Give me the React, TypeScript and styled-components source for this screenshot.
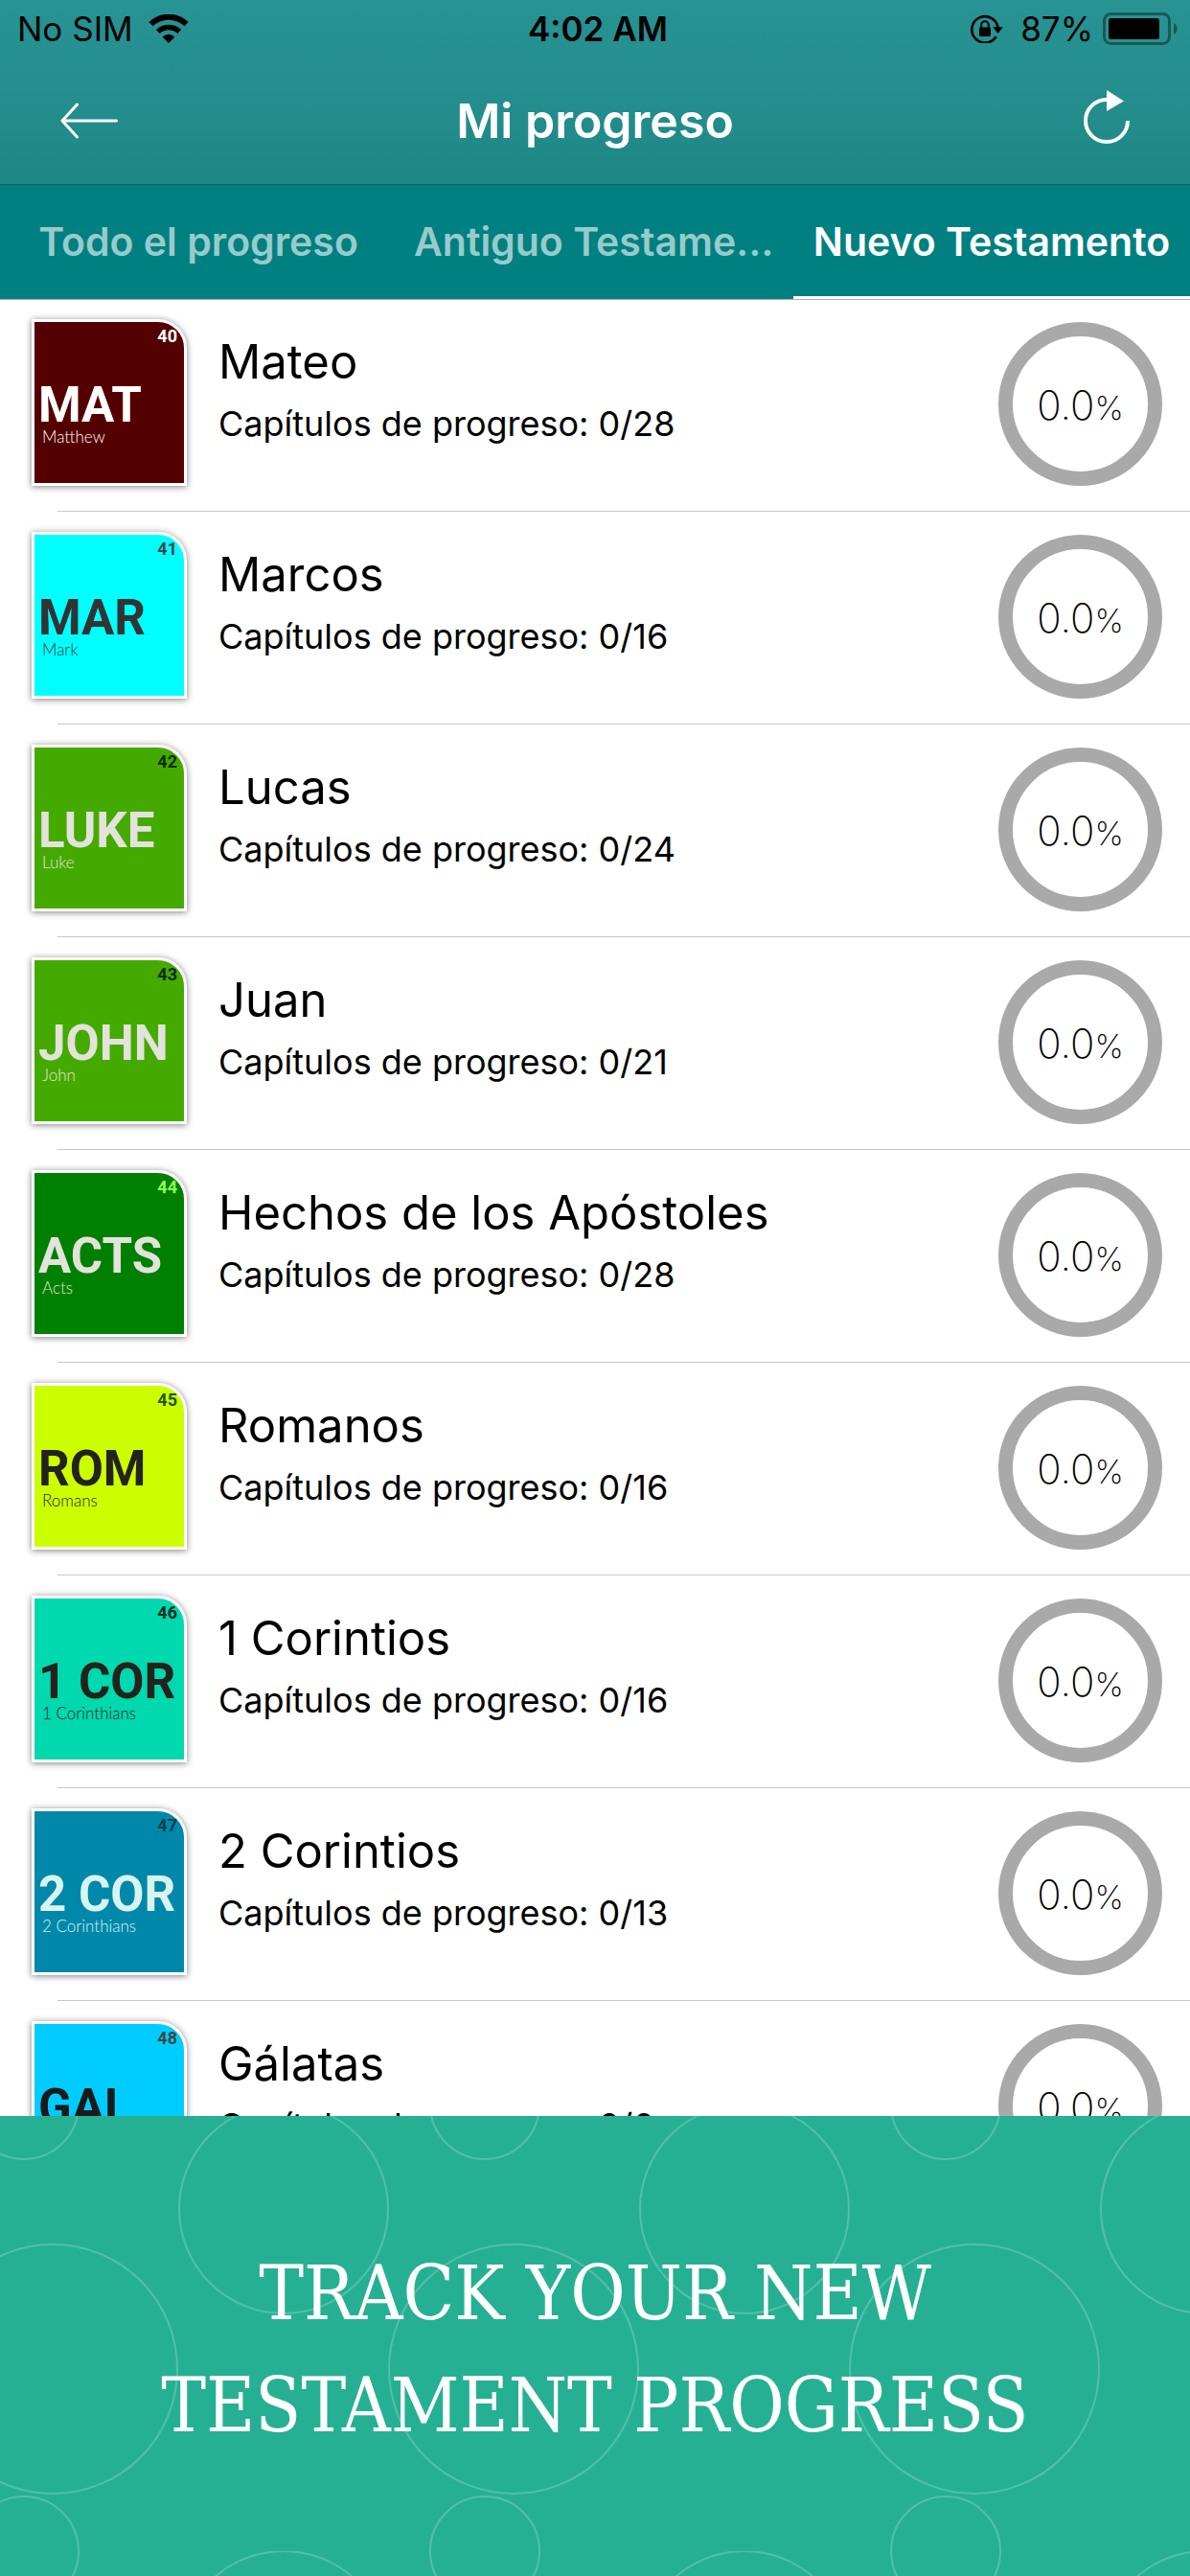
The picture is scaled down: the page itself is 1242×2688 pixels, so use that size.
import React, { useState } from 'react'
import styled, { createGlobalStyle } from 'styled-components'

const GlobalStyle = createGlobalStyle`
  * {
    box-sizing: border-box;
  }
  body {
    margin: 0;
    background: #fff;
    color: #000;
    font-family: Inter, 'Liberation Sans', sans-serif;
  }
  button {
    border: 0;
    padding: 0;
    background: none;
    color: inherit;
    font: inherit;
    cursor: pointer;
  }
`

const Screen = styled.div`
  display: flex;
  flex-direction: column;
  height: 100vh;
  overflow: hidden;
`

const Header = styled.header`
  flex: none;
  background: linear-gradient(#279392, #238e8d 55%, #1e8785);
  border-bottom: 1px solid #0c6261;
`

const StatusBar = styled.div`
  display: grid;
  grid-template-columns: 1fr auto 1fr;
  align-items: center;
  height: 60px;
  padding: 0 12px 0 18px;
  font-size: 35px;
`

const StatusGroup = styled.div<{ $end?: boolean }>`
  display: flex;
  align-items: center;
  justify-content: ${(p) => (p.$end ? 'flex-end' : 'flex-start')};
  gap: ${(p) => (p.$end ? 10 : 16)}px;

  svg {
    flex: none;
  }
`

const Clock = styled.span`
  font-weight: 600;
`

const Charge = styled.span`
  margin-left: 8px;
`

const NavBar = styled.div`
  display: grid;
  grid-template-columns: 90px 1fr 90px;
  align-items: center;
  height: 132px;
  padding: 0 48px;
  color: #fff;
`

const NavButton = styled.button<{ $end?: boolean }>`
  display: flex;
  justify-content: ${(p) => (p.$end ? 'flex-end' : 'flex-start')};
  padding: 0 15px;

  svg {
    flex: none;
  }
`

const Title = styled.h1`
  margin: 0;
  font-size: 50px;
  font-weight: 600;
  line-height: 60px;
  text-align: center;
`

const Tabs = styled.div`
  position: relative;
  flex: none;
  display: grid;
  grid-template-columns: repeat(3, 1fr);
  height: 119px;
  background: #008080;
  box-shadow: 0 1px #b2b2b2;
  z-index: 1;
`

const Tab = styled.button<{ $active: boolean }>`
  overflow: hidden;
  padding: 2px 18px 0;
  border-bottom: 3px solid ${(p) => (p.$active ? '#fff' : 'transparent')};
  color: ${(p) => (p.$active ? '#fff' : 'rgba(255, 255, 255, 0.6)')};
  font-size: 41px;
  font-weight: 600;
  text-overflow: ellipsis;
  white-space: nowrap;
`

const List = styled.ul`
  flex: 1;
  min-height: 0;
  margin: 0;
  padding: 0;
  overflow: hidden;
  list-style: none;
`

const Row = styled.div`
  display: grid;
  grid-template-columns: 162px 1fr 171px;
  column-gap: 33px;
  height: 221px;
  padding: 21px 29px 0 33px;
`

const Divider = styled.div`
  height: 1px;
  margin-left: 60px;
  background: #c8c7cc;
`

const Tile = styled.div<{ $bg: string }>`
  display: flex;
  flex-direction: column;
  height: 174px;
  padding: 5px 7px 0 4px;
  border: 3px solid #fff;
  border-top-right-radius: 30px;
  background: ${(p) => p.$bg};
  box-shadow: 0 1px 7px rgba(0, 0, 0, 0.5);
  white-space: nowrap;
`

const TileNumber = styled.span<{ $color: string }>`
  align-self: flex-end;
  margin-bottom: 38px;
  color: ${(p) => p.$color};
  font: bold 18px/20px Roboto, sans-serif;
`

const TileCode = styled.span<{ $color: string }>`
  color: ${(p) => p.$color};
  font: bold 51px/48px Roboto, sans-serif;
`

const TileName = styled.span<{ $color: string }>`
  padding-left: 4px;
  color: ${(p) => p.$color};
  font: 300 17px/18px Lato, sans-serif;
`

const Info = styled.div`
  min-width: 0;
  padding-top: 15px;
`

const BookTitle = styled.h2`
  margin: 0 0 10px;
  font-size: 49px;
  font-weight: 400;
  line-height: 60px;
`

const Chapters = styled.p`
  margin: 0;
  font-size: 36px;
  line-height: 48px;
`

const Ring = styled.div`
  display: flex;
  align-items: center;
  justify-content: center;
  height: 171px;
  margin-top: 3px;
  padding-top: 2px;
  border: 15px solid #a9a9a9;
  border-radius: 50%;
  font-size: 42px;
  font-weight: 200;

  small {
    font-size: 34px;
  }
`

const Banner = styled.section`
  position: relative;
  flex: none;
  display: flex;
  align-items: center;
  justify-content: center;
  height: 480px;
  background: #26b093;
`

const Bubbles = styled.svg`
  position: absolute;
  inset: 0;
  width: 100%;
  height: 100%;
`

const Slogan = styled.p`
  position: relative;
  margin: 0;
  padding-top: 8px;
  color: #fff;
  font-family: 'DejaVu Serif Condensed', 'DejaVu Serif', serif;
  font-size: 78px;
  line-height: 117px;
  text-align: center;
`

const WifiIcon = () => (
  <svg width="42" height="30" viewBox="0 0 42 30" fill="none" aria-hidden="true">
    <path d="M2.5 10.2a26.5 26.5 0 0 1 37 0" stroke="#000" strokeWidth="6" />
    <path d="M9.8 18a16 16 0 0 1 22.4 0" stroke="#000" strokeWidth="5.6" />
    <path d="M21 30l-6.4-6.6a9.3 9.3 0 0 1 12.8 0z" fill="#000" />
  </svg>
)

const LockIcon = () => (
  <svg width="34" height="30" viewBox="0 0 34 30" fill="none" aria-hidden="true">
    <path
      d="M26.6 23.2A13.7 13.7 0 1 1 28.6 14"
      stroke="#000"
      strokeWidth="2.6"
    />
    <path d="M23.2 13.2h10.6L28.6 20z" fill="#000" />
    <rect x="9" y="13.5" width="12" height="9.5" rx="1.4" fill="#000" />
    <path d="M11.2 14v-3a3.8 3.8 0 0 1 7.6 0v3" stroke="#000" strokeWidth="2" />
  </svg>
)

const BatteryIcon = () => (
  <svg width="79" height="34" viewBox="0 0 79 34" fill="none" aria-hidden="true">
    <rect
      x="1.5"
      y="1.5"
      width="68"
      height="31"
      rx="7"
      stroke="#1a5958"
      strokeWidth="3"
    />
    <rect x="6" y="6" width="53" height="22" rx="2.5" fill="#000" />
    <path d="M74 11c5 2 5 10 0 12z" fill="#1a5958" />
  </svg>
)

const BackIcon = () => (
  <svg width="60" height="38" viewBox="0 0 60 38" fill="none" aria-hidden="true">
    <path
      d="M58.5 19H2M17.5 2L2 19l15.5 17"
      stroke="#fff"
      strokeWidth="3"
      strokeLinecap="round"
      strokeLinejoin="round"
    />
  </svg>
)

const RefreshIcon = () => (
  <svg width="48" height="64" viewBox="0 0 48 64" fill="none" aria-hidden="true">
    <path d="M46 32A22 22 0 1 1 24 10" stroke="#fff" strokeWidth="4" />
    <path d="M24 0l18 11.5L24 22z" fill="#fff" />
  </svg>
)

const tabs = ['Todo el progreso', 'Antiguo Testamento', 'Nuevo Testamento']

type Book = {
  title: string
  code: string
  name: string
  chapters: number
  bg: string
  codeColor: string
  numberColor: string
  nameColor: string
}

const books: Book[] = [
  { title: 'Mateo', code: 'MAT', name: 'Matthew', chapters: 28, bg: '#550000', codeColor: '#fff', numberColor: '#fff', nameColor: '#fff' },
  { title: 'Marcos', code: 'MAR', name: 'Mark', chapters: 16, bg: '#00ffff', codeColor: '#333', numberColor: '#444', nameColor: '#333' },
  { title: 'Lucas', code: 'LUKE', name: 'Luke', chapters: 24, bg: '#44aa00', codeColor: '#e3e2db', numberColor: '#112b00', nameColor: '#e3e2db' },
  { title: 'Juan', code: 'JOHN', name: 'John', chapters: 21, bg: '#44aa00', codeColor: '#e3e2db', numberColor: '#112b00', nameColor: '#e3e2db' },
  { title: 'Hechos de los Apóstoles', code: 'ACTS', name: 'Acts', chapters: 28, bg: '#008000', codeColor: '#e3e2db', numberColor: '#8dff55', nameColor: '#e3e2db' },
  { title: 'Romanos', code: 'ROM', name: 'Romans', chapters: 16, bg: '#ccff00', codeColor: '#24221c', numberColor: '#225500', nameColor: '#24221c' },
  { title: '1 Corintios', code: '1 COR', name: '1 Corinthians', chapters: 16, bg: '#00d8ae', codeColor: '#24221c', numberColor: '#002b22', nameColor: '#24221c' },
  { title: '2 Corintios', code: '2 COR', name: '2 Corinthians', chapters: 13, bg: '#0088aa', codeColor: '#d7f4ee', numberColor: '#003f50', nameColor: '#d7f4ee' },
  { title: 'Gálatas', code: 'GAL', name: 'Galatians', chapters: 6, bg: '#00ccff', codeColor: '#1a1a1a', numberColor: '#444', nameColor: '#1a1a1a' },
]

const FIRST_BOOK = 40 // Matthew is the 40th book of the Bible

const BookRow = ({ book, number }: { book: Book; number: number }) => (
  <li>
    <Row>
      <Tile $bg={book.bg}>
        <TileNumber $color={book.numberColor}>{number}</TileNumber>
        <TileCode $color={book.codeColor}>{book.code}</TileCode>
        <TileName $color={book.nameColor}>{book.name}</TileName>
      </Tile>
      <Info>
        <BookTitle>{book.title}</BookTitle>
        <Chapters>Capítulos de progreso: 0/{book.chapters}</Chapters>
      </Info>
      <Ring>
        <span>
          0.0<small>%</small>
        </span>
      </Ring>
    </Row>
    <Divider />
  </li>
)

const App = () => {
  const [activeTab, setActiveTab] = useState(2)

  return (
    <Screen>
      <GlobalStyle />
      <Header>
        <StatusBar>
          <StatusGroup>
            <span>No SIM</span>
            <WifiIcon />
          </StatusGroup>
          <Clock>4:02 AM</Clock>
          <StatusGroup $end>
            <LockIcon />
            <Charge>87%</Charge>
            <BatteryIcon />
          </StatusGroup>
        </StatusBar>
        <NavBar>
          <NavButton aria-label="Atrás">
            <BackIcon />
          </NavButton>
          <Title>Mi progreso</Title>
          <NavButton $end aria-label="Actualizar">
            <RefreshIcon />
          </NavButton>
        </NavBar>
      </Header>

      <Tabs role="tablist">
        {tabs.map((tab, index) => (
          <Tab
            key={tab}
            role="tab"
            aria-selected={index === activeTab}
            $active={index === activeTab}
            onClick={() => setActiveTab(index)}
          >
            {tab}
          </Tab>
        ))}
      </Tabs>

      <List>
        {books.map((book, index) => (
          <BookRow key={book.code} book={book} number={FIRST_BOOK + index} />
        ))}
      </List>

      <Banner>
        <Bubbles aria-hidden="true">
          <defs>
            {/* one repeat of the bubbles, each one drawn again where it crosses an edge */}
            <pattern
              id="bubbles"
              x="55"
              y="-12"
              width="481"
              height="466"
              patternUnits="userSpaceOnUse"
            >
              <g fill="none" stroke="#fff" strokeOpacity="0.2" strokeWidth="2">
                <circle cx="0" cy="276" r="130" />
                <circle cx="481" cy="276" r="130" />
                <circle cx="241" cy="109" r="109" />
                <circle cx="451" cy="0" r="57" />
                <circle cx="451" cy="466" r="57" />
                <circle cx="-30" cy="0" r="57" />
                <circle cx="-30" cy="466" r="57" />
              </g>
            </pattern>
          </defs>
          <rect width="100%" height="100%" fill="url(#bubbles)" />
        </Bubbles>
        <Slogan>
          TRACK YOUR NEW
          <br />
          TESTAMENT PROGRESS
        </Slogan>
      </Banner>
    </Screen>
  )
}

export default App
